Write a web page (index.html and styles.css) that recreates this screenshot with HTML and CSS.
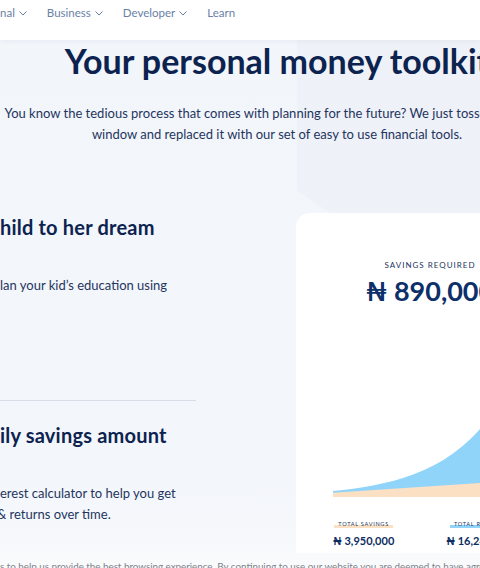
FILE: index.html
```html
<!DOCTYPE html>
<html lang="en">
<head>
<meta charset="utf-8">
<title>Your personal money toolkit</title>
<link rel="stylesheet" href="styles.css">
</head>
<body>
<header class="nav">
  <ul class="nav-list">
    <li class="nav-item">nal <svg class="chev" width="8" height="5" viewBox="0 0 8 5"><path d="M0.5 0.5 L4 4 L7.5 0.5" fill="none" stroke="currentColor" stroke-width="1"/></svg></li>
    <li class="nav-item">Business <svg class="chev" width="8" height="5" viewBox="0 0 8 5"><path d="M0.5 0.5 L4 4 L7.5 0.5" fill="none" stroke="currentColor" stroke-width="1"/></svg></li>
    <li class="nav-item">Developer <svg class="chev" width="8" height="5" viewBox="0 0 8 5"><path d="M0.5 0.5 L4 4 L7.5 0.5" fill="none" stroke="currentColor" stroke-width="1"/></svg></li>
    <li class="nav-item">Learn</li>
  </ul>
</header>
<main class="page">
  <div class="backdrop"></div>
  <section class="hero">
    <h1 class="hero-title">Your personal money toolkit</h1>
    <p class="hero-text">You know the tedious process that comes with planning for the future? We just tossed it out the<br>window and replaced it with our set of easy to use financial tools.</p>
  </section>
  <section class="tools">
    <div class="tool-list">
      <article class="tool">
        <h2 class="tool-title">hild to her dream</h2>
        <p class="tool-text">lan your kid’s education using</p>
      </article>
      <hr class="divider">
      <article class="tool">
        <h2 class="tool-title">ily savings amount</h2>
        <p class="tool-text">erest calculator to help you get<br><span class="cut">&amp; returns over time.</span></p>
      </article>
    </div>
    <div class="card">
      <p class="card-label">SAVINGS REQUIRED</p>
      <p class="card-amount">₦ 890,000</p>
      <svg class="chart" width="194" height="180" viewBox="0 0 194 180">
        <polygon fill="#91d4fa" points="0,180 0,174 10,172.9 20,171.7 30,170.2 40,168.4 50,166.3 60,163.9 70,161 80,157.5 90,153.5 100,148.8 110,143.2 120,136.5 130,128.7 140,119.6 150,108.7 160,95.9 170,80.8 180,63 194,33 194,180"/>
        <polygon fill="#fbe0c4" points="0,180 0,175.7 194,162.9 194,180"/>
      </svg>
      <div class="legend">
        <div class="legend-item">
          <span class="legend-label legend-label--savings">TOTAL SAVINGS</span>
          <span class="legend-amount">₦ 3,950,000</span>
        </div>
        <div class="legend-item">
          <span class="legend-label legend-label--returns">TOTAL RETURNS</span>
          <span class="legend-amount">₦ 16,245,210</span>
        </div>
      </div>
    </div>
  </section>
</main>
<div class="cookie">s to help us provide the best browsing experience. By continuing to use our website you are deemed to have agreed to our use of cookies.</div>
</body>
</html>
```

FILE: styles.css
```css
* { box-sizing: border-box; }

html, body {
  margin: 0;
  padding: 0;
}

body {
  font-family: Lato, "Noto Sans", sans-serif;
  background: linear-gradient(180deg, #f2f5fa 0%, #f3f6fb 85%, #f8fafc 100%);
  color: #0c2350;
  overflow: hidden;
  width: 480px;
  height: 568px;
}

.nav {
  height: 40px;
  background: #ffffff;
  box-shadow: 0 1px 6px rgba(20, 40, 80, 0.05);
  padding-top: 6px;
  position: relative;
  z-index: 2;
}

.nav-list {
  list-style: none;
  margin: 0;
  padding: 0;
  display: flex;
  gap: 20px;
  font-size: 11.5px;
  line-height: 14px;
  color: #6b7fa6;
}

.nav-item {
  display: flex;
  align-items: center;
  gap: 4px;
  white-space: nowrap;
}

.chev { display: block; margin-top: 1px; }

.page {
  position: relative;
  width: 564px;
}

.backdrop {
  position: absolute;
  left: 297px;
  top: 0;
  width: 300px;
  height: 173px;
  background: rgba(226, 231, 239, 0.25);
  clip-path: polygon(0 0, 100% 0, 100% 100%, 33px 100%, 0 150px);
  z-index: 0;
}

.hero {
  position: relative;
  width: 554px;
  text-align: center;
  z-index: 1;
}

.hero-title {
  margin: 0;
  font-size: 34px;
  line-height: 41px;
  font-weight: 700;
  color: #0c2350;
  white-space: nowrap;
}

.hero-text {
  margin: 22px 0 0;
  font-size: 13px;
  line-height: 21px;
  color: #1f3560;
  white-space: nowrap;
}

.tools {
  position: relative;
  z-index: 1;
  display: flex;
  align-items: flex-start;
  gap: 100px;
  margin-top: 68px;
}

.tool-list {
  width: 196px;
  flex: none;
  padding-top: 2px;
}

.tool-title {
  margin: 0;
  font-size: 20px;
  line-height: 24px;
  font-weight: 700;
  letter-spacing: 0.2px;
  color: #0c2350;
  white-space: nowrap;
}

.tool-text {
  margin: 36px 0 0;
  font-size: 13px;
  line-height: 21px;
  color: #1f3560;
  white-space: nowrap;
}

.cut { margin-left: -3px; }

.divider {
  border: 0;
  border-top: 1px solid #d6dce6;
  margin: 104px 0 22px;
}

.card {
  width: 268px;
  flex: none;
  height: 360px;
  background: #ffffff;
  border-radius: 14px;
  padding: 47px 37px 0;
  display: flex;
  flex-direction: column;
  align-items: center;
}

.card-label {
  margin: 0;
  font-size: 8px;
  line-height: 10px;
  letter-spacing: 1px;
  color: #203560;
}

.card-label,
.card-amount { white-space: nowrap; }

.card-amount {
  margin: 5px 0 0;
  font-size: 27px;
  line-height: 32px;
  font-weight: 700;
  color: #0d2f6a;
}

.chart {
  display: block;
  margin-top: 10px;
  align-self: flex-start;
}

.legend {
  align-self: flex-start;
  display: flex;
  gap: 52px;
  margin-top: 23px;
}

.legend-item {
  display: flex;
  flex-direction: column;
  align-items: center;
  gap: 6px;
}

.legend-label {
  display: inline-block;
  font-size: 5.6px;
  line-height: 8px;
  letter-spacing: 0.7px;
  padding: 0 4px;
  color: #203560;
  white-space: nowrap;
}

.legend-label--savings {
  background: linear-gradient(180deg, transparent 62%, #fbe0c4 62%);
}

.legend-label--returns {
  background: linear-gradient(180deg, transparent 62%, #91d4fa 62%);
}

.legend-amount {
  font-size: 11px;
  line-height: 14px;
  font-weight: 700;
  color: #0c2c62;
  white-space: nowrap;
}

.cookie {
  position: fixed;
  left: 0;
  right: 0;
  bottom: 0;
  height: 15px;
  overflow: hidden;
  background: #f9fafb;
  padding-top: 7px;
  font-size: 9.8px;
  line-height: 12px;
  color: #7c828b;
  white-space: nowrap;
  z-index: 3;
}
```
